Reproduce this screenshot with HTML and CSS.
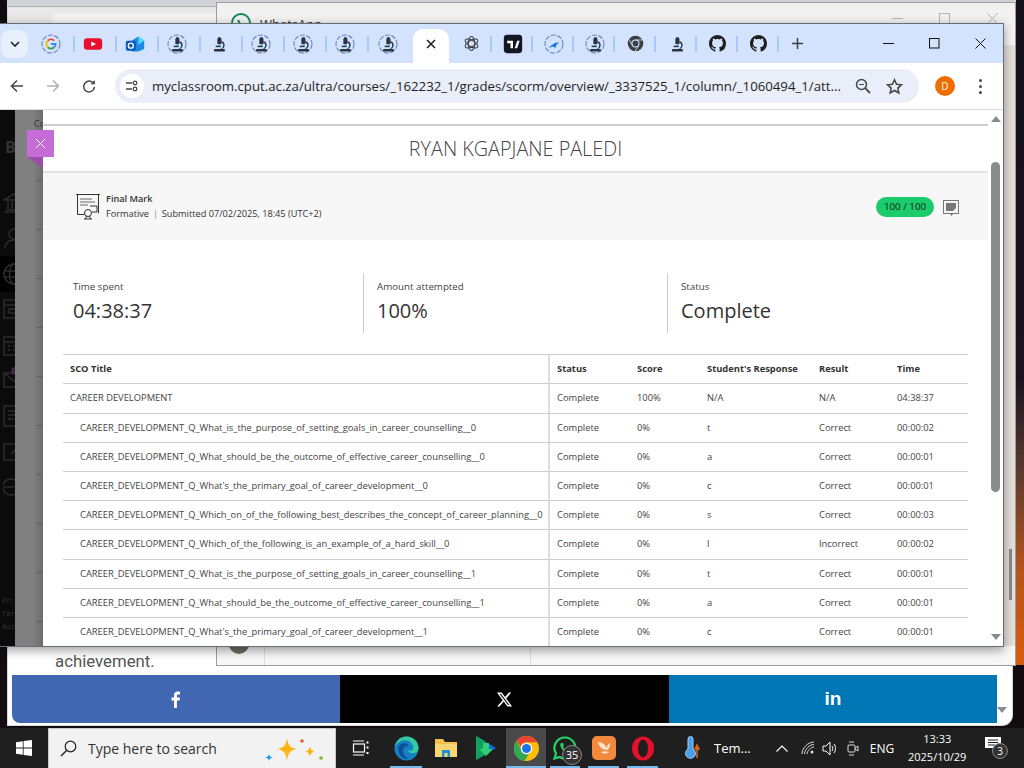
FILE: index.html
```html
<!DOCTYPE html>
<html lang="en">
<head>
    <meta charset="UTF-8">
    <title>Final Mark</title>
    <link rel="stylesheet" href="styles.css">
</head>
<body>
<svg class="defs" width="0" height="0">
    <symbol id="scope" viewBox="0 0 24 24">
        <path d="M11 4h3l1 2.500v5.500h-5V6.500z" fill="#2f3340"/>
        <path d="M15 8.500c3 1 4.500 3.500 3.500 6.500-.4 1.200-1.200 2.200-2 2.800h-2.700c2-.8 3.200-2.200 3.200-4.300 0-1.500-.8-2.700-2-3.200z" fill="#2f3340"/>
        <rect x="6" y="18" width="13" height="3" rx=".5" fill="#2f3340"/>
        <rect x="8" y="14" width="6" height="1.800" fill="#2f3340"/>
        <rect x="11" y="12.500" width="3" height="2" fill="#2aa7e0"/>
    </symbol>
    <symbol id="ring" viewBox="0 0 24 24">
        <circle cx="12" cy="12" r="10.800" fill="none" stroke="#6c86c0" stroke-width="1.300" stroke-dasharray="6 1.800"/>
    </symbol>
    <symbol id="github" viewBox="0 0 16 16">
        <path fill="#1f1f1f" d="M8 0C3.580 0 0 3.580 0 8c0 3.540 2.290 6.530 5.470 7.590.4.070.55-.17.55-.38 0-.19-.01-.82-.01-1.490-2.010.37-2.530-.49-2.690-.94-.09-.23-.48-.94-.82-1.130-.28-.15-.68-.52-.01-.53.63-.01 1.080.58 1.230.82.72 1.210 1.870.87 2.330.66.07-.52.28-.87.51-1.070-1.780-.2-3.640-.89-3.640-3.950 0-.87.31-1.590.82-2.150-.08-.2-.36-1.020.08-2.120 0 0 .67-.21 2.200.82.64-.18 1.320-.27 2-.27s1.360.09 2 .27c1.530-1.040 2.200-.82 2.200-.82.44 1.100.16 1.920.08 2.120.51.56.82 1.270.82 2.150 0 3.070-1.870 3.750-3.650 3.950.29.25.54.73.54 1.480 0 1.070-.01 1.930-.01 2.200 0 .21.15.46.55.38A8.013 8.013 0 0016 8c0-4.420-3.580-8-8-8z"/>
    </symbol>
</svg>

<div class="desktop">
    <div class="wallpaper-orange"></div>
    <div class="back-strip"></div>

    <!-- window behind everything, only the bottom shows -->
    <div class="win-page">
        <div class="page-tab"><i></i></div>
        <p class="page-text">achievement.</p>
        <div class="share-bar">
            <div class="share share-fb">
                <svg width="10" height="17" viewBox="0 0 10 17"><path fill="#fff" d="M3 17V9.500H0.500V6.500H3V4.300C3 1.700 4.500.5 6.700.5c1 0 2 .1 2.300.2v2.700H7.400c-1.200 0-1.500.6-1.500 1.400v1.700h3l-.4 3H5.900V17z"/></svg>
            </div>
            <div class="share share-x">
                <svg width="17" height="17" viewBox="0 0 24 24"><path fill="#fff" d="M18.240 2.250h3.310l-7.230 8.260 8.500 11.240H16.170l-5.210-6.820L4.990 21.750H1.680l7.730-8.840L1.250 2.250H8.080l4.710 6.230zm-1.160 17.520h1.830L7.080 4.130H5.120z"/></svg>
            </div>
            <div class="share share-in">in</div>
        </div>
        <div class="page-arrow"></div>
    </div>

    <div class="win-whatsapp">
        <div class="wa-title">
            <svg width="22" height="22" viewBox="0 0 22 22"><circle cx="11" cy="11" r="9" fill="none" stroke="#128c4b" stroke-width="2"/><path d="M8 8l3 6" stroke="#128c4b" stroke-width="2"/></svg>
            <span>WhatsApp</span>
            <div class="wa-controls">
                <i class="wa-min"></i>
                <i class="wa-max"></i>
                <svg width="13" height="13" viewBox="0 0 13 13"><path d="M1 1l11 11M12 1L1 12" stroke="#b5b5b5"/></svg>
            </div>
        </div>
        <div class="wa-main">
            <div class="wa-thumb"></div>
        </div>
        <div class="wa-foot">
            <div class="wa-avatar"></div>
            <div class="wa-side"></div>
            <div class="wa-chat"></div>
        </div>
    </div>

    <!-- chrome window -->
    <div class="win-chrome">
        <div class="tabstrip">
            <div class="tab-search">
                <svg width="10" height="6" viewBox="0 0 10 6"><path d="M1 1l4 4 4-4" fill="none" stroke="#1f1f1f" stroke-width="1.600"/></svg>
            </div>
            <div class="tab">
                <svg class="fav" viewBox="0 0 24 24">
                    <use href="#ring"/>
                    <path d="M8.100 8.100A5.500 5.500 0 0115.700 7.900" fill="none" stroke="#ea4335" stroke-width="2.200"/>
                    <path d="M8.100 8.100a5.500 5.500 0 000 7.800" fill="none" stroke="#fbbc05" stroke-width="2.200"/>
                    <path d="M8.100 15.900a5.500 5.500 0 007.800 0" fill="none" stroke="#34a853" stroke-width="2.200"/>
                    <path d="M15.900 15.900a5.500 5.500 0 001.600-3.900H12" fill="none" stroke="#4285f4" stroke-width="2.200"/>
                </svg>
            </div>
            <div class="tab">
                <svg class="fav" viewBox="0 0 24 24"><rect x="1" y="5" width="22" height="14" rx="4" fill="#e8112d"/><path d="M10 9l5.500 3-5.500 3z" fill="#fff"/></svg>
            </div>
            <div class="tab">
                <svg class="fav" viewBox="0 0 24 24"><path d="M8 8l8-5 7 5v10l-7 3H8z" fill="#1e88e5"/><path d="M16 3l7 5-7 5z" fill="#50d9ff"/><rect x="1" y="8" width="12" height="12" rx="2" fill="#0a5bb8"/><circle cx="7" cy="14" r="3" fill="none" stroke="#fff" stroke-width="1.600"/></svg>
            </div>
            <div class="tab"><svg class="fav"><use href="#ring"/><use href="#scope"/></svg></div>
            <div class="tab"><svg class="fav"><use href="#scope"/></svg></div>
            <div class="tab"><svg class="fav"><use href="#ring"/><use href="#scope"/></svg></div>
            <div class="tab"><svg class="fav"><use href="#ring"/><use href="#scope"/></svg></div>
            <div class="tab"><svg class="fav"><use href="#ring"/><use href="#scope"/></svg></div>
            <div class="tab tab-last"><svg class="fav"><use href="#ring"/><use href="#scope"/></svg></div>
            <div class="tab-active">
                <svg width="10" height="10" viewBox="0 0 10 10"><path d="M1 1l8 8M9 1L1 9" stroke="#1f1f1f" stroke-width="1.500"/></svg>
            </div>
            <div class="tab tab-r">
                <svg class="fav fav-small" viewBox="0 0 24 24"><g fill="none" stroke="#3c4043" stroke-width="1.500"><ellipse cx="12" cy="12" rx="10" ry="4.500" transform="rotate(30 12 12)"/><ellipse cx="12" cy="12" rx="10" ry="4.500" transform="rotate(90 12 12)"/><ellipse cx="12" cy="12" rx="10" ry="4.500" transform="rotate(150 12 12)"/></g></svg>
            </div>
            <div class="tab tab-r">
                <svg class="fav" viewBox="0 0 24 24"><rect x="1" y="1" width="22" height="22" rx="4" fill="#131722"/><path d="M5 8h7v9H9v-6H5zM17 8h3l-3 9h-3z" fill="#fff"/></svg>
            </div>
            <div class="tab tab-r">
                <svg class="fav" viewBox="0 0 24 24"><use href="#ring"/><path d="M5 17c2-1 3-3 5-4 2-2 5-3 9-3-2 1-3 2-4 3 0 2-1 3-2 4l-1-2c-2 0-4 1-7 2z" fill="#1a73e8"/></svg>
            </div>
            <div class="tab tab-r"><svg class="fav"><use href="#ring"/><use href="#scope"/></svg></div>
            <div class="tab tab-r">
                <svg class="fav fav-small" viewBox="0 0 24 24"><circle cx="12" cy="12" r="11" fill="#3c4043"/><circle cx="12" cy="12" r="5" fill="#3c4043" stroke="#d3e3fd" stroke-width="1.500"/><path d="M12 7h10M7.700 14.500L3 6.500M16.300 14.500L11.500 23" stroke="#d3e3fd" stroke-width="1.200"/></svg>
            </div>
            <div class="tab tab-r"><svg class="fav"><use href="#scope"/></svg></div>
            <div class="tab tab-r"><svg class="fav fav-small"><use href="#github"/></svg></div>
            <div class="tab tab-r"><svg class="fav fav-small"><use href="#github"/></svg></div>
            <div class="new-tab">
                <svg width="11" height="11" viewBox="0 0 11 11"><path d="M5.500 0v11M0 5.500h11" stroke="#3c4043" stroke-width="1.500"/></svg>
            </div>
            <div class="win-controls">
                <div class="win-btn"><svg width="11" height="11" viewBox="0 0 11 11"><path d="M0 5.500h11" stroke="#111"/></svg></div>
                <div class="win-btn"><svg width="11" height="11" viewBox="0 0 11 11"><rect x=".5" y=".5" width="9.500" height="9.500" fill="none" stroke="#111"/></svg></div>
                <div class="win-btn"><svg width="11" height="11" viewBox="0 0 11 11"><path d="M.5.500l10 10M10.500.500l-10 10" stroke="#111"/></svg></div>
            </div>
        </div>

        <div class="toolbar">
            <div class="nav-btn">
                <svg width="14" height="14" viewBox="0 0 14 14"><path d="M13 7H2M7 1.500L1.500 7 7 12.500" fill="none" stroke="#474747" stroke-width="1.500"/></svg>
            </div>
            <div class="nav-btn">
                <svg width="14" height="14" viewBox="0 0 14 14"><path d="M1 7h11M7 1.500L12.500 7 7 12.500" fill="none" stroke="#b0b0b0" stroke-width="1.500"/></svg>
            </div>
            <div class="nav-btn">
                <svg width="14" height="14" viewBox="0 0 14 14"><path d="M12 4.500A5.600 5.600 0 102.800 11 5.600 5.600 0 0012.500 8" fill="none" stroke="#474747" stroke-width="1.500"/><path d="M12.800 1v4.300H8.500z" fill="#474747"/></svg>
            </div>
            <div class="omnibox">
                <div class="site-btn">
                    <svg width="14" height="14" viewBox="0 0 14 14"><g fill="none" stroke="#474747" stroke-width="1.300"><path d="M1 4h6M1 10h6"/><circle cx="10" cy="4" r="1.800"/><circle cx="10" cy="10" r="1.800"/></g></svg>
                </div>
                <span class="url">myclassroom.cput.ac.za/ultra/courses/_162232_1/grades/scorm/overview/_3337525_1/column/_1060494_1/att...</span>
                <svg class="omni-icon" width="16" height="16" viewBox="0 0 16 16"><circle cx="6.500" cy="6.500" r="5" fill="none" stroke="#474747" stroke-width="1.500"/><path d="M4 6.500h5" stroke="#474747"/><path d="M10.200 10.200L15 15" stroke="#474747" stroke-width="1.800"/></svg>
                <svg class="omni-star" width="17" height="17" viewBox="0 0 24 24"><path d="M12 2.500l2.900 6.300 6.900.8-5.100 4.700 1.400 6.800-6.100-3.500-6.100 3.500 1.400-6.800-5.100-4.700 6.900-.8z" fill="none" stroke="#474747" stroke-width="2.200"/></svg>
            </div>
            <div class="avatar">D</div>
            <div class="kebab"><i></i><i></i><i></i></div>
        </div>

        <div class="content">
            <div class="rail">
                <div class="rail-logo">B</div>
                <ul class="rail-icons">
                    <li><svg width="22" height="20" viewBox="0 0 22 20"><path d="M1 7l10-6 10 6zM3 17h16M1 19h20M5 8v8M9 8v8M13 8v8M17 8v8"/></svg></li>
                    <li><svg width="22" height="22" viewBox="0 0 22 22"><circle cx="11" cy="7" r="5"/><path d="M2 21c0-5 4-8 9-8s9 3 9 8"/></svg></li>
                    <li class="rail-on"><svg width="22" height="22" viewBox="0 0 22 22"><circle cx="11" cy="11" r="10"/><ellipse cx="11" cy="11" rx="4.500" ry="10"/><path d="M1 8h20M1 14h20"/></svg></li>
                    <li><svg width="22" height="20" viewBox="0 0 22 20"><rect x="1" y="1" width="20" height="18"/><path d="M1 6h20M6 10h8v4H6z"/></svg></li>
                    <li><svg width="22" height="22" viewBox="0 0 22 22"><rect x="1" y="3" width="20" height="18"/><path d="M1 8h20M5 12h2M10 12h2M15 12h2M5 16h2M10 16h2"/></svg></li>
                    <li class="rail-mail"><svg width="22" height="18" viewBox="0 0 22 18"><rect x="1" y="2" width="20" height="14"/><path d="M1 2l10 8 10-8"/></svg></li>
                    <li><svg width="22" height="22" viewBox="0 0 22 22"><rect x="1" y="1" width="18" height="20"/><path d="M5 6h10M5 10h10M5 14h6"/></svg></li>
                    <li><svg width="22" height="20" viewBox="0 0 22 20"><rect x="1" y="3" width="18" height="16"/><path d="M8 13l9-9"/></svg></li>
                    <li><svg width="22" height="20" viewBox="0 0 22 20"><path d="M14 5a8 8 0 100 10M1 10h10"/></svg></li>
                </ul>
                <div class="rail-foot">Pri<br>Ter<br>Acc</div>
            </div>
            <div class="scrim"><span>Co</span></div>

            <div class="modal">
                <h1 class="modal-title">RYAN KGAPJANE PALEDI</h1>
                <div class="attempt">
                    <svg class="cert" width="26" height="27" viewBox="0 0 26 27"><g fill="none" stroke="#333" stroke-width="1"><path d="M1 1.500h24M2.500 1.500v20h7M23.500 1.500v19"/><path d="M5 6h12M5 9h15M5 12h8" stroke="#666"/><path d="M15 13h7v6h-5"/><circle cx="13" cy="20" r="3.500"/><path d="M10.500 26l1-3M15.500 26l-1-3M9 26h8"/></g></svg>
                    <div class="attempt-info">
                        <div class="attempt-name">Final Mark</div>
                        <div class="attempt-sub">Formative <span class="pipe">|</span> Submitted 07/02/2025, 18:45 (UTC+2)</div>
                    </div>
                    <div class="grade-pill">100 / 100</div>
                    <svg class="feedback" width="17" height="17" viewBox="0 0 17 17"><rect x=".5" y=".5" width="15" height="13" fill="none" stroke="#777"/><path d="M3 3h10v5l-3 3H3z" fill="#777"/><path d="M7 14h3l-1.500 2z" fill="#777"/></svg>
                </div>

                <div class="stats">
                    <div class="stat">
                        <div class="stat-label">Time spent</div>
                        <div class="stat-value">04:38:37</div>
                    </div>
                    <div class="stat">
                        <div class="stat-label">Amount attempted</div>
                        <div class="stat-value">100%</div>
                    </div>
                    <div class="stat">
                        <div class="stat-label">Status</div>
                        <div class="stat-value">Complete</div>
                    </div>
                </div>

                <table class="sco">
                    <colgroup>
                        <col class="c-title"><col class="c-status"><col class="c-score"><col class="c-resp"><col class="c-result"><col>
                    </colgroup>
                    <thead>
                        <tr><th>SCO Title</th><th>Status</th><th>Score</th><th>Student's Response</th><th>Result</th><th>Time</th></tr>
                    </thead>
                    <tbody>
                        <tr class="tall"><td>CAREER DEVELOPMENT</td><td>Complete</td><td>100%</td><td>N/A</td><td>N/A</td><td>04:38:37</td></tr>
                        <tr><td class="sub">CAREER_DEVELOPMENT_Q_What_is_the_purpose_of_setting_goals_in_career_counselling__0</td><td>Complete</td><td>0%</td><td>t</td><td>Correct</td><td>00:00:02</td></tr>
                        <tr><td class="sub">CAREER_DEVELOPMENT_Q_What_should_be_the_outcome_of_effective_career_counselling__0</td><td>Complete</td><td>0%</td><td>a</td><td>Correct</td><td>00:00:01</td></tr>
                        <tr><td class="sub">CAREER_DEVELOPMENT_Q_What's_the_primary_goal_of_career_development__0</td><td>Complete</td><td>0%</td><td>c</td><td>Correct</td><td>00:00:01</td></tr>
                        <tr><td class="sub">CAREER_DEVELOPMENT_Q_Which_on_of_the_following_best_describes_the_concept_of_career_planning__0</td><td>Complete</td><td>0%</td><td>s</td><td>Correct</td><td>00:00:03</td></tr>
                        <tr class="tall"><td class="sub">CAREER_DEVELOPMENT_Q_Which_of_the_following_is_an_example_of_a_hard_skill__0</td><td>Complete</td><td>0%</td><td>l</td><td>Incorrect</td><td>00:00:02</td></tr>
                        <tr><td class="sub">CAREER_DEVELOPMENT_Q_What_is_the_purpose_of_setting_goals_in_career_counselling__1</td><td>Complete</td><td>0%</td><td>t</td><td>Correct</td><td>00:00:01</td></tr>
                        <tr><td class="sub">CAREER_DEVELOPMENT_Q_What_should_be_the_outcome_of_effective_career_counselling__1</td><td>Complete</td><td>0%</td><td>a</td><td>Correct</td><td>00:00:01</td></tr>
                        <tr><td class="sub">CAREER_DEVELOPMENT_Q_What's_the_primary_goal_of_career_development__1</td><td>Complete</td><td>0%</td><td>c</td><td>Correct</td><td>00:00:01</td></tr>
                    </tbody>
                </table>
            </div>

            <div class="close-wrap">
                <div class="close-btn">
                    <svg width="11" height="11" viewBox="0 0 11 11"><path d="M1 1l9 9M10 1l-9 9" stroke="#fff"/></svg>
                </div>
                <div class="close-fold"></div>
            </div>

            <div class="scroller">
                <div class="arrow-up"></div>
                <div class="thumb"></div>
                <div class="arrow-down"></div>
            </div>
        </div>
    </div>
</div>

<div class="taskbar">
    <div class="start">
        <svg width="16" height="16" viewBox="0 0 16 16"><path fill="#fff" d="M0 2.200l6.800-1v6.400H0zM7.600 1L16 0v7.600H7.600zM0 8.400h6.800v6.400l-6.800-1zM7.600 8.400H16V16l-8.400-1.100z"/></svg>
    </div>
    <div class="search">
        <svg width="17" height="17" viewBox="0 0 17 17"><circle cx="10.500" cy="6.500" r="5.300" fill="none" stroke="#222" stroke-width="1.200"/><path d="M6.800 10.300L1 16" stroke="#222" stroke-width="1.400"/></svg>
        <span class="search-text">Type here to search</span>
        <svg class="sparkle" width="62" height="26" viewBox="0 0 62 26">
            <path d="M24 1c1 7 3 10 10 11-7 1-9 4-10 12-1-8-3-11-10-12 7-1 9-4 10-11z" fill="#fbb614"/>
            <path d="M47 9c.5 3 1.500 5 5 5.500-3.500.5-4.500 2.500-5 5.500-.5-3-1.500-5-5-5.500 3.500-.5 4.500-2.500 5-5.500z" fill="#fbb614"/>
            <path d="M6 17c.4 2 1 3 4 3.500-3 .5-3.600 1.500-4 3.500-.4-2-1-3-4-3.500 3-.5 3.600-1.500 4-3.500z" fill="#1b9de2"/>
            <circle cx="39" cy="4" r="1.800" fill="#f0592a"/>
            <circle cx="58" cy="21" r="1.800" fill="#7ab82e"/>
        </svg>
    </div>
    <div class="taskview">
        <svg width="17" height="16" viewBox="0 0 17 16"><g fill="none" stroke="#fff" stroke-width="1.200"><rect x="1.500" y="4" width="11" height="8"/><path d="M1 1h11M1 15h11"/></g><path d="M14.500 1.500h2v2h-2zM14.500 6.500h2v2h-2zM14.500 12h2v2h-2z" fill="#fff"/></svg>
    </div>
    <div class="task-apps">
        <div class="app app-on">
            <svg width="25" height="25" viewBox="0 0 24 24"><circle cx="12" cy="12" r="11.500" fill="#1580c4"/><path d="M12 .5c6.500 0 11.500 5 11.500 11 0 3-2.500 5-5.500 5-2.500 0-4.500-1-4.500-2.500 1 .3 5 .5 5-3C18.500 7 15 4 11 4 6.500 4 2 7 .6 11 1.500 5 6 .5 12 .5z" fill="#36c9a0"/><path d="M4 12c0-3 3-5 6-5 2.500 0 4 1.300 4 2.500-3 0-5.500 2-5.500 5 0 3 2.500 6 6 7-6 2-10.500-4-10.500-9.500z" fill="#0c4f9c"/></svg>
        </div>
        <div class="app">
            <svg width="24" height="22" viewBox="0 0 24 22"><path d="M1 2h8l2 3h12v15H1z" fill="#f6c14b"/><rect x="1" y="7" width="22" height="13" fill="#fbd774"/><rect x="8" y="13" width="8" height="7" fill="#1c8fd8"/><rect x="10.500" y="16" width="3" height="4" fill="#fbd774"/></svg>
        </div>
        <div class="app">
            <svg width="22" height="26" viewBox="0 0 22 26"><path d="M1 1l20 12L1 25z" fill="#1668dc"/><path d="M1 1l9 5v14l-9 5z" fill="#12a05c"/><path d="M8 8h6v6h4l-7 7-7-7h4z" fill="#2fd072"/></svg>
        </div>
        <div class="app app-on app-active">
            <svg width="25" height="25" viewBox="0 0 24 24"><circle cx="12" cy="12" r="12" fill="#fbbc05"/><path d="M12 0a12 12 0 0110.400 6H12a6 6 0 00-5.700 4L2.400 4.500A12 12 0 0112 0z" fill="#ea4335"/><path d="M2.400 4.500L7 13a6 6 0 007 4.700L10 24A12 12 0 012.400 4.500z" fill="#34a853"/><circle cx="12" cy="12" r="5.500" fill="#fff"/><circle cx="12" cy="12" r="4.300" fill="#1a73e8"/></svg>
        </div>
        <div class="app app-on">
            <svg width="24" height="24" viewBox="0 0 24 24"><path d="M12 1.500A10.500 10.500 0 003 17.500L1.500 22.500l5-1.500A10.500 10.500 0 1012 1.500z" fill="none" stroke="#25d366" stroke-width="2.200"/><path d="M8 7c-1 1-1 3 .5 5.500S12 16 14.500 16.500c1.500.2 2.500-1 2.500-2l-2.500-1.300-1 1c-1.500-.5-3-2-3.500-3.500l1-1L10 7z" fill="#25d366"/></svg>
            <span class="wa-badge">35</span>
        </div>
        <div class="app app-on">
            <div class="orange-app">
                <svg width="16" height="16" viewBox="0 0 16 16"><path d="M2 2c5 0 8 3 9 8-4 0-8-3-9-8zM14 3c0 4-1 6-3 7-1-2 0-5 3-7zM5 12c2-1 5-1 8 0-2 2-6 2-8 0z" fill="#fbe3cf"/></svg>
            </div>
        </div>
        <div class="app app-on">
            <svg width="24" height="25" viewBox="0 0 24 25"><ellipse cx="12" cy="12.500" rx="11" ry="12" fill="#e5112a"/><ellipse cx="12" cy="12.500" rx="5" ry="9" fill="#1f1f1f"/></svg>
        </div>
    </div>
    <div class="weather">
        <svg width="15" height="24" viewBox="0 0 15 24"><path d="M3 3a2.500 2.500 0 015 0v10a5 5 0 11-5 0z" fill="#4b9fe8" stroke="#a6cdf2"/><path d="M12 22V11M10 13l2-4 2 4z" stroke="#e0661c" fill="#e0661c" stroke-width="1.500"/></svg>
        <span>Tem...</span>
    </div>
    <div class="tray">
        <svg class="tray-chev" width="12" height="7" viewBox="0 0 12 7"><path d="M.5 6.500L6 1l5.500 5.500" fill="none" stroke="#fff" stroke-width="1.200"/></svg>
        <svg class="tray-wifi" width="14" height="14" viewBox="0 0 14 14"><g fill="none" stroke="#ddd"><path d="M1 13C1 7 7 1 13 1M3.500 13C3.500 8.500 8.500 3.500 13 3.500M6 13c0-3 4-7 7-7"/></g><circle cx="11" cy="11" r="1.500" fill="#ddd"/></svg>
        <svg class="tray-vol" width="16" height="15" viewBox="0 0 16 15"><g fill="none" stroke="#fff"><path d="M1 5h3l4-4v13l-4-4H1z"/><path d="M10 5c1 1.500 1 3.500 0 5M12 3c2 2.500 2 6.500 0 9"/></g></svg>
        <svg class="tray-cam" width="12" height="17" viewBox="0 0 12 17"><g fill="none" stroke="#ddd"><rect x="1" y="5" width="7" height="7" rx="1"/><path d="M8 8l3-2v5l-3-2M2 2h5M2 15h5"/></g></svg>
        <span class="tray-lang">ENG</span>
        <div class="clock"><div>13:33</div><div>2025/10/29</div></div>
        <div class="notify">
            <svg width="16" height="13" viewBox="0 0 16 13"><path d="M0 0h16v11H10l-2 2v-2H0z" fill="#fff"/><path d="M3 3h10M3 5.500h10M3 8h7" stroke="#1f1f1f"/></svg>
            <span class="notify-badge">3</span>
        </div>
    </div>
</div>
</body>
</html>
```

FILE: styles.css
```css
* {
    box-sizing: border-box;
}
html, body {
    margin: 0;
    height: 100%;
}
body {
    width: 1024px;
    height: 768px;
    overflow: hidden;
    display: flex;
    flex-direction: column;
    font-family: "Open Sans", sans-serif;
    background: #120c10;
}
.defs {
    position: absolute;
}
i {
    display: block;
}

.desktop {
    position: relative;
    height: 728px;
    overflow: hidden;
}
.wallpaper-orange {
    position: absolute;
    left: 1016px;
    top: 0;
    width: 8px;
    height: 665px;
    background: linear-gradient(#14101c 0, #1a1420 380px, #5a3a30 470px, #b4541c 570px, #d55c10 660px);
}
.back-strip {
    position: absolute;
    left: 7px;
    top: 0;
    width: 1009px;
    height: 7px;
    background: #cfd3d8;
}

/* back window */
.win-page {
    position: absolute;
    left: 8px;
    top: 6px;
    width: 1004px;
    height: 719px;
    background: #fff;
    border-top: 1px solid #a9adb2;
    border-radius: 0 0 10px 0;
    box-shadow: 0 0 0 1px #d8d8d8;
}
.page-tab {
    position: absolute;
    left: 0;
    top: 0;
    width: 210px;
    height: 20px;
    padding: 6px 0 0 44px;
    background: #e8e8e8;
}
.page-tab i {
    height: 14px;
    border-radius: 8px 0 0 0;
    background: #f3f3f3;
}
.page-text {
    position: absolute;
    left: 47px;
    top: 644px;
    margin: 0;
    font: 16.8px "Roboto", sans-serif;
    color: #555;
}
.share-bar {
    position: absolute;
    left: 4px;
    top: 668px;
    width: 985px;
    height: 48px;
    display: flex;
}
.share {
    flex: 1;
    display: flex;
    align-items: center;
    justify-content: center;
}
.share-fb {
    background: #4267b2;
    border-radius: 0 0 0 8px;
}
.share-x {
    background: #000;
}
.share-in {
    background: #0077b5;
    color: #fff;
    font: bold 19px "Liberation Sans", sans-serif;
}
.page-arrow {
    position: absolute;
    right: 5px;
    top: 700px;
    border-left: 5px solid transparent;
    border-right: 5px solid transparent;
    border-top: 6px solid #8b8b8b;
}

/* whatsapp, mostly covered */
.win-whatsapp {
    position: absolute;
    left: 216px;
    top: 2px;
    width: 800px;
    height: 664px;
    display: flex;
    flex-direction: column;
    background: #f5f5f5;
    border: 1px solid #9e9e9e;
}
.wa-title {
    height: 42px;
    display: flex;
    align-items: flex-start;
    gap: 8px;
    padding: 9px 0 0 13px;
    background: linear-gradient(#f0f0f0, #f6f6f6);
    font-size: 13px;
    color: #333;
}
.wa-title span {
    margin-top: 3px;
}
.wa-controls {
    margin-left: auto;
    display: flex;
    align-items: center;
    gap: 36px;
    padding-right: 16px;
}
.wa-min {
    width: 11px;
    border-top: 1px solid #b5b5b5;
}
.wa-max {
    width: 11px;
    height: 11px;
    border: 1px solid #b5b5b5;
}
.wa-main {
    flex: 1;
    position: relative;
    background: #e6e0da;
}
.wa-thumb {
    position: absolute;
    right: 3px;
    top: 504px;
    width: 3px;
    height: 51px;
    background: #8a8a8a;
}
.wa-foot {
    height: 20px;
    position: relative;
    display: flex;
    background: #f7f7f7;
    border-top: 1px solid #e4e4e4;
}
.wa-side {
    width: 48px;
    border-right: 1px solid #ddd;
}
.wa-chat {
    width: 266px;
    border-right: 1px solid #ddd;
}
.wa-avatar {
    position: absolute;
    left: 12px;
    top: -12px;
    width: 20px;
    height: 20px;
    border-radius: 50%;
    background: #6e6a60;
}

/* chrome */
.win-chrome {
    position: absolute;
    left: -1px;
    top: 23px;
    width: 1005px;
    height: 624px;
    display: flex;
    flex-direction: column;
    background: #fff;
    border: 1px solid #686e78;
    box-shadow: 0 3px 10px rgba(0, 0, 0, 0.4);
}
.tabstrip {
    height: 39px;
    flex: none;
    display: flex;
    align-items: center;
    background: #d3e3fd;
}
.tab-search {
    width: 27px;
    height: 28px;
    margin: 0 5px 0 1px;
    border-radius: 9px;
    background: #e9f0fd;
    display: flex;
    align-items: center;
    justify-content: center;
}
.tab {
    width: 42px;
    height: 16px;
    padding-right: 4px;
    display: flex;
    align-items: center;
    justify-content: center;
    border-right: 2px solid #a8c7fa;
}
.tab-last {
    width: 41px;
    border-right: none;
}
.tab-r {
    width: 41px;
    padding: 0 0 0 2px;
}
.fav {
    width: 20px;
    height: 20px;
    flex: none;
}
.fav-small {
    width: 17px;
    height: 17px;
}
.tab-active {
    width: 36px;
    height: 34px;
    margin: 5px 2px 0 3px;
    border-radius: 10px 10px 0 0;
    background: #fff;
    display: flex;
    align-items: center;
    justify-content: center;
    padding-bottom: 4px;
}
.new-tab {
    width: 36px;
    display: flex;
    justify-content: center;
}
.win-controls {
    margin-left: auto;
    display: flex;
}
.win-btn {
    width: 46px;
    height: 30px;
    display: flex;
    align-items: center;
    justify-content: center;
}
.toolbar {
    height: 47px;
    flex: none;
    display: flex;
    align-items: center;
    background: #fff;
    border-bottom: 1px solid #dadce0;
    border-radius: 0 8px 0 0;
}
.nav-btn {
    width: 36px;
    margin-left: -1px;
    margin-right: 1px;
    display: flex;
    justify-content: center;
}
.omnibox {
    width: 804px;
    height: 34px;
    margin-left: 7px;
    display: flex;
    align-items: center;
    padding-left: 5px;
    border-radius: 17px;
    background: #e9eef8;
}
.site-btn {
    width: 24px;
    height: 24px;
    border-radius: 50%;
    background: #fff;
    display: flex;
    align-items: center;
    justify-content: center;
}
.url {
    margin-left: 8px;
    width: 690px;
    flex: none;
    font-size: 13.23px;
    color: #1f1f1f;
    white-space: nowrap;
}
.omni-icon {
    margin-left: 13px;
}
.omni-star {
    margin-left: 15px;
}
.avatar {
    width: 20px;
    height: 20px;
    margin-left: 16px;
    border-radius: 50%;
    background: #ef6c00;
    color: #fff;
    font-size: 10px;
    display: flex;
    align-items: center;
    justify-content: center;
}
.kebab {
    margin-left: 24px;
    display: flex;
    flex-direction: column;
    gap: 3px;
}
.kebab i {
    width: 3px;
    height: 3px;
    border-radius: 50%;
    background: #474747;
}

.content {
    flex: 1;
    position: relative;
    overflow: hidden;
    background: #fff;
}
.rail {
    position: absolute;
    left: 0;
    top: 0;
    bottom: 0;
    width: 15px;
    background: #0b0b0b;
    color: #333;
    overflow: hidden;
}
.rail-logo {
    position: absolute;
    left: 5px;
    top: 26px;
    font-size: 16px;
    font-weight: 700;
}
.rail-icons {
    list-style: none;
    margin: 0;
    padding: 0;
    position: absolute;
    top: 75px;
    left: 0;
    width: 15px;
}
.rail-icons li {
    height: 35.500px;
    padding-left: 3px;
    display: flex;
    align-items: center;
}
.rail-icons svg {
    flex: none;
    fill: none;
    stroke: #2c2c2c;
    stroke-width: 1.500;
}
.rail-on {
    background: #000;
}
.rail-mail {
    position: relative;
}
.rail-mail::after {
    content: "";
    position: absolute;
    left: 11px;
    top: 4px;
    width: 8px;
    height: 8px;
    border-radius: 50%;
    background: #3d2747;
}
.rail-foot {
    position: absolute;
    left: 2px;
    top: 483px;
    font-size: 8px;
    line-height: 13px;
}
.scrim {
    position: absolute;
    left: 15px;
    top: 0;
    bottom: 0;
    width: 28px;
    background: linear-gradient(90deg, #808080 0, #808080 18px, #6d6d6d 28px);
}
.scrim::after {
    content: "";
    position: absolute;
    left: 21px;
    right: 0;
    top: 21px;
    bottom: 0;
    background: repeating-linear-gradient(#5f5f5f 0, #5f5f5f 1px, transparent 1px, transparent 49px);
}
.scrim span {
    position: absolute;
    left: 19px;
    top: 7px;
    font-size: 9px;
    color: #333;
}
.modal {
    position: absolute;
    left: 43px;
    top: 0;
    right: 15px;
    bottom: 0;
    overflow: hidden;
    background: #fff;
    padding-top: 14px;
}
.modal-title {
    margin: 0;
    height: 49px;
    border-top: 2px solid #ccc;
    border-bottom: 2px solid #e2e2e2;
    text-align: center;
    font-size: 19.800px;
    line-height: 45px;
    font-weight: 300;
    color: #444;
}
.attempt {
    height: 67px;
    display: flex;
    align-items: center;
    padding: 0 29px 0 32px;
    background: #f7f7f7;
}
.attempt-info {
    margin-left: 5px;
}
.attempt-name {
    font-size: 9.200px;
    font-weight: 600;
    line-height: 14px;
    color: #333;
}
.attempt-sub {
    font-size: 9.200px;
    line-height: 15px;
    color: #333;
}
.pipe {
    margin: 0 1.500px;
    color: #888;
}
.grade-pill {
    margin-left: auto;
    width: 58px;
    height: 20px;
    border-radius: 10px;
    background: #1ccb6c;
    color: #0a1f12;
    font-size: 9.750px;
    text-align: center;
    line-height: 20px;
}
.feedback {
    margin-left: 9px;
    margin-right: -1px;
    margin-top: 3px;
}
.stats {
    display: flex;
    margin: 33px 20px 0 20px;
    height: 60px;
}
.stat {
    flex: none;
    width: 304px;
    padding: 7px 0 0 13px;
    border-left: 1px solid #ccc;
}
.stat:first-child {
    width: 300px;
    padding-left: 10px;
    border-left: none;
}
.stat:last-child {
    width: 301px;
}
.stat-label {
    font-size: 9.750px;
    line-height: 14px;
    color: #444;
}
.stat-value {
    margin-top: 3px;
    font-size: 20px;
    line-height: 28px;
    color: #333;
}
.sco {
    width: 905px;
    margin: 21px 20px 0 20px;
    table-layout: fixed;
    border-collapse: separate;
    border-spacing: 0;
    border-top: 1px solid #ccc;
    font-size: 9.350px;
    color: #444;
}
.c-title {
    width: 487px;
}
.c-status {
    width: 80px;
}
.c-score {
    width: 70px;
}
.c-resp {
    width: 112px;
}
.c-result {
    width: 78px;
}
.sco th, .sco td {
    height: 29px;
    padding: 0 0 2px 7px;
    border-bottom: 1px solid #ccc;
    text-align: left;
    white-space: nowrap;
}
.sco th {
    font-weight: 700;
    color: #333;
}
.sco tr.tall td {
    height: 30px;
}
.sco th:first-child, .sco td:first-child {
    border-right: 2px solid #ddd;
}
.sco td.sub {
    padding-left: 17px;
}
.close-wrap {
    position: absolute;
    left: 27px;
    top: 20px;
}
.close-btn {
    width: 27px;
    height: 27px;
    background: #c56cd6;
    display: flex;
    align-items: center;
    justify-content: center;
}
.close-fold {
    width: 0;
    height: 0;
    border-top: 11px solid #9a4ea6;
    border-left: 16px solid transparent;
}
.scroller {
    position: absolute;
    right: 0;
    top: 0;
    bottom: 0;
    width: 15px;
    background: #fff;
}
.arrow-up {
    position: absolute;
    left: 3px;
    top: 6px;
    border-left: 5px solid transparent;
    border-right: 5px solid transparent;
    border-bottom: 6px solid #8b8b8b;
}
.thumb {
    position: absolute;
    left: 3px;
    top: 52px;
    width: 9px;
    height: 330px;
    border-radius: 5px;
    background: #8b8b8b;
}
.arrow-down {
    position: absolute;
    left: 3px;
    bottom: 6px;
    border-left: 5px solid transparent;
    border-right: 5px solid transparent;
    border-top: 6px solid #8b8b8b;
}

/* taskbar */
.taskbar {
    height: 40px;
    display: flex;
    align-items: center;
    background: #1f1f1f;
    color: #fff;
}
.start {
    width: 48px;
    height: 100%;
    display: flex;
    align-items: center;
    justify-content: center;
    padding-right: 1px;
}
.search {
    width: 288px;
    height: 100%;
    display: flex;
    align-items: center;
    padding-left: 11px;
    background: #f2f2f2;
    border: 1px solid #c9c9c9;
    border-bottom: none;
}
.search-text {
    margin-left: 11px;
    font-size: 14px;
    color: #333;
}
.sparkle {
    margin-left: 46px;
    margin-top: 2px;
    flex: none;
}
.taskview {
    width: 50px;
    padding-right: 2px;
    display: flex;
    justify-content: center;
}
.task-apps {
    display: grid;
    grid-template-columns: 40px 40px 40px 40px 38px 39px 39px;
    height: 100%;
}
.app {
    position: relative;
    display: flex;
    align-items: center;
    justify-content: center;
}
.app-on::after {
    content: "";
    position: absolute;
    left: 4px;
    right: 4px;
    bottom: 0;
    height: 2px;
    background: #76b9ed;
}
.app-active {
    background: #4a4a4a;
}
.app-active::after {
    left: 0;
    right: 0;
}
.wa-badge {
    position: absolute;
    left: 16px;
    top: 17px;
    width: 20px;
    height: 20px;
    border-radius: 50%;
    background: #333;
    border: 1px solid #888;
    font-size: 11px;
    line-height: 18px;
    text-align: center;
}
.orange-app {
    width: 24px;
    height: 24px;
    border-radius: 5px;
    background: #f28a3d;
    display: flex;
    align-items: center;
    justify-content: center;
}
.weather {
    margin-left: 23px;
    display: flex;
    align-items: center;
    gap: 14px;
    font-size: 13px;
}
.tray {
    margin-left: 25px;
    display: flex;
    align-items: center;
    flex: 1;
    font-size: 12px;
}
.tray-wifi {
    margin-left: 13px;
}
.tray-vol {
    margin-left: 7px;
}
.tray-cam {
    margin-left: 9px;
}
.tray-lang {
    margin-left: 11px;
}
.clock {
    margin-left: 13px;
    width: 60px;
    text-align: center;
    line-height: 18px;
    font-size: 11px;
}
.notify {
    position: relative;
    margin-left: 18px;
    width: 24px;
    margin-bottom: 6px;
}
.notify-badge {
    position: absolute;
    left: 7px;
    top: 6px;
    width: 16px;
    height: 16px;
    border-radius: 50%;
    background: #333;
    border: 1px solid #888;
    font-size: 10px;
    line-height: 14px;
    text-align: center;
}
```
